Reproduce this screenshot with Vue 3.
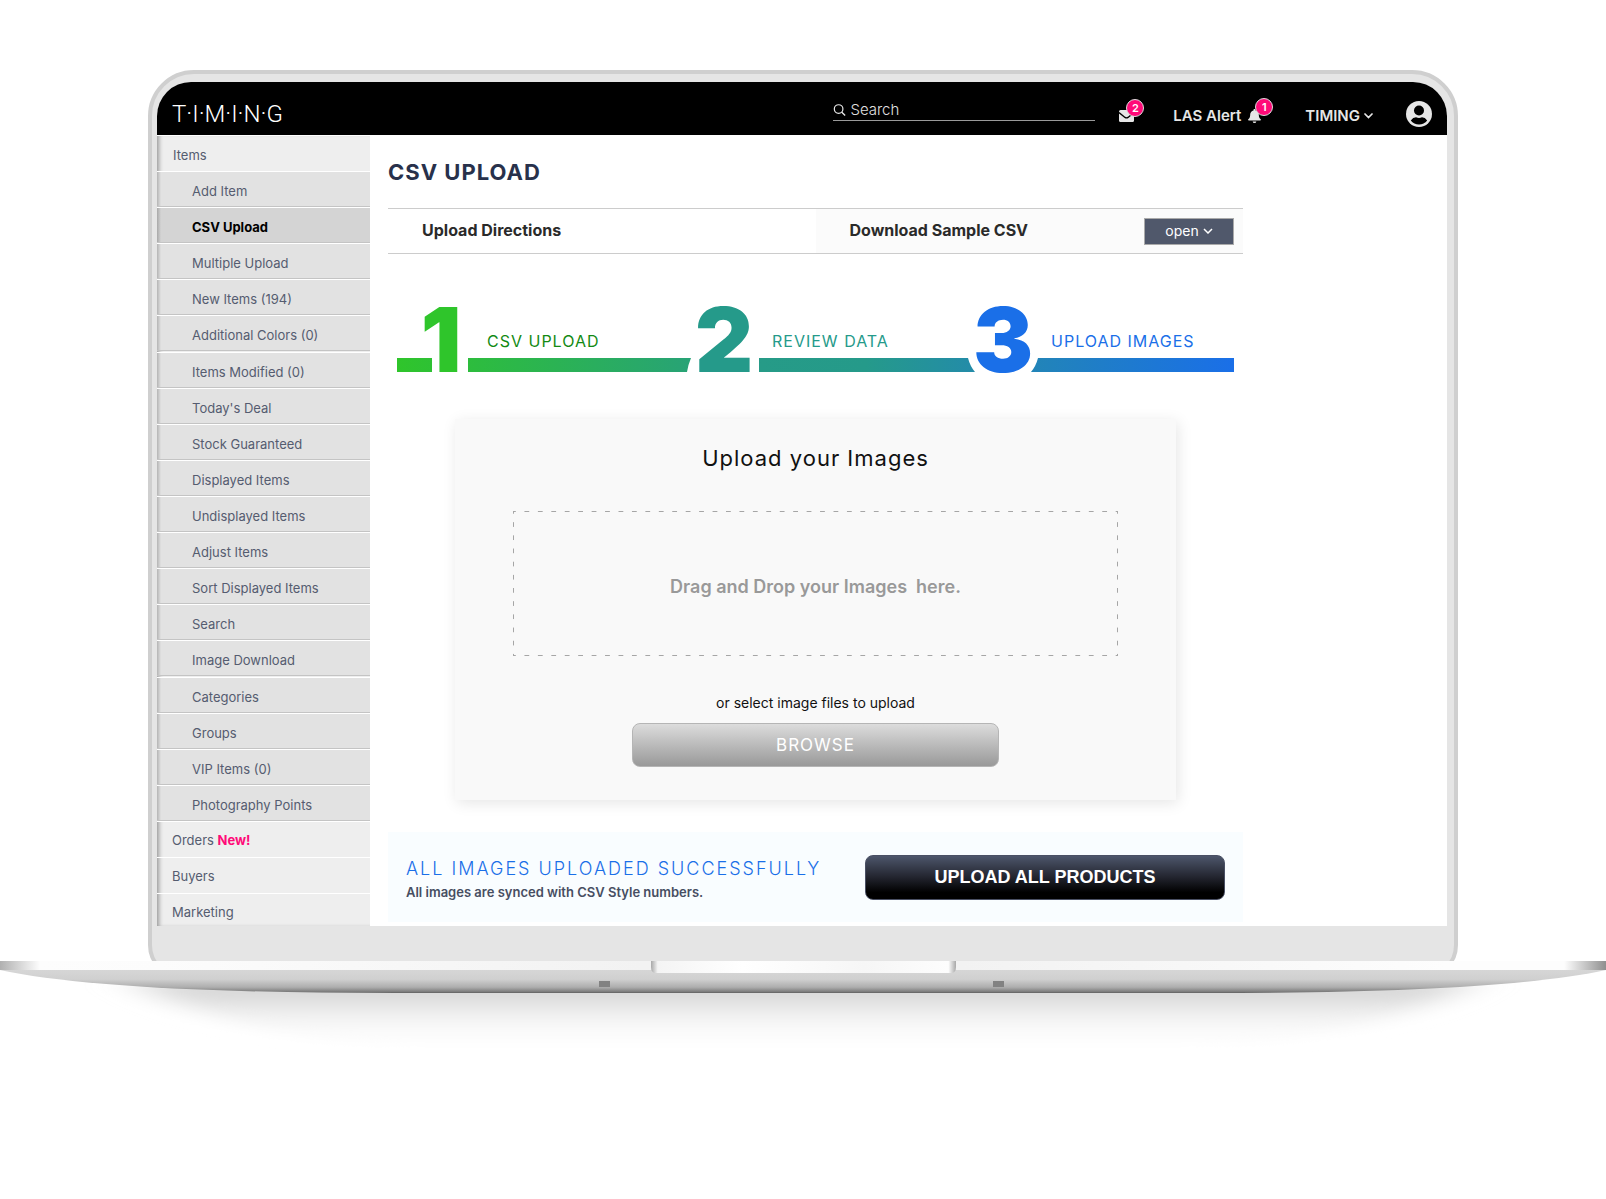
<template>
  <div class="stage">
    <div class="lid">
      <div class="screen">
        <header class="topbar">
          <a href="#" class="logo">T·I·M·I·N·G</a>
          <label class="search">
            <svg width="14" height="14" viewBox="0 0 14 14" aria-hidden="true">
              <circle cx="6" cy="6" r="4.6" fill="none" stroke="#e6e6e6" stroke-width="1.3" />
              <path d="M9.4 9.4 13 13" stroke="#e6e6e6" stroke-width="1.5" />
            </svg>
            <input v-model="query" type="text" placeholder="Search" aria-label="Search" />
          </label>
          <button class="top-item mail" aria-label="Messages">
            <span class="icon-wrap">
              <svg width="15" height="12" viewBox="0 0 15 12">
                <rect width="15" height="12" rx="1.5" fill="#e6e6e6" />
                <path d="M0 2.6 6 7.4q1.5 1 3 0L15 2.6" fill="none" stroke="#000" stroke-width="1.3" />
              </svg>
              <span class="badge">2</span>
            </span>
          </button>
          <button class="top-item alert">
            LAS Alert
            <span class="icon-wrap">
              <svg width="13" height="14" viewBox="0 0 13 14">
                <path d="M6.5 0c.6 0 1 .4 1 1v.4c2 .4 3.3 2 3.3 4.1 0 2.8.7 3.7 1.9 4.8.5.5.2 1.3-.6 1.3H.9c-.8 0-1.1-.8-.6-1.3C1.5 9.2 2.2 8.3 2.2 5.5c0-2.1 1.3-3.7 3.3-4.1V1c0-.6.4-1 1-1z" fill="#e6e6e6" />
                <path d="M4.7 12.4h3.6a1.8 1.6 0 0 1-3.6 0z" fill="#e6e6e6" />
              </svg>
              <span class="badge">1</span>
            </span>
          </button>
          <button class="top-item account">
            TIMING
            <svg width="9" height="6" viewBox="0 0 9 6">
              <path d="M1 1l3.5 3.5L8 1" fill="none" stroke="#e6e6e6" stroke-width="1.7" stroke-linecap="round" />
            </svg>
          </button>
          <button class="profile" aria-label="Profile">
            <svg width="26" height="26" viewBox="0 0 26 26">
              <circle cx="13" cy="13" r="13" fill="#e6e6e6" />
              <circle cx="13" cy="9.5" r="5" fill="#000" />
              <path d="M4.8 19.5q2.2-3.2 5.2-3.2 3 1.2 6 0 3 0 5.2 3.2a10.5 10.5 0 0 1-16.4 0z" fill="#000" />
            </svg>
          </button>
        </header>

        <div class="body">
          <nav class="sidebar">
            <a href="#" class="section first">Items</a>
            <ul class="sub">
              <li v-for="item in items" :key="item">
                <a href="#" :class="{ active: item === activeItem }" @click.prevent="activeItem = item">{{ item }}</a>
              </li>
            </ul>
            <a href="#" class="section">Orders <b>New!</b></a>
            <a href="#" class="section">Buyers</a>
            <a href="#" class="section last">Marketing</a>
          </nav>

          <main class="content">
            <h1>CSV UPLOAD</h1>

            <div class="tabs">
              <div class="tab">
                <h2>Upload Directions</h2>
              </div>
              <div class="tab sample">
                <h2>Download Sample CSV</h2>
                <button class="open">
                  open
                  <svg width="10" height="6" viewBox="0 0 10 6">
                    <path d="M1 1l4 4 4-4" fill="none" stroke="#fff" stroke-width="1.5" />
                  </svg>
                </button>
              </div>
            </div>

            <svg class="steps" viewBox="0 -20 855 120">
              <defs>
                <linearGradient id="bar" gradientUnits="userSpaceOnUse" x1="9" y1="0" x2="846" y2="0">
                  <stop offset="0" stop-color="#2fc52b" />
                  <stop offset="0.43" stop-color="#269b87" />
                  <stop offset="0.56" stop-color="#259a8a" />
                  <stop offset="0.72" stop-color="#2388b0" />
                  <stop offset="1" stop-color="#1a6fe8" />
                </linearGradient>
              </defs>
              <g fill="url(#bar)">
                <path d="M9 58h35v14H9z" />
                <path d="M80 58h223q-3 7-4 14H80z" />
                <path d="M371 58h209q2 8 7 14H371z" />
                <path d="M650 58h196v14H643q5-6 7-14z" />
              </g>
              <g v-for="step in steps" :key="step.num">
                <text class="num" :x="step.numX" y="72" :fill="step.color">{{ step.num }}</text>
                <text class="label" :x="step.labelX" y="47" :fill="step.labelColor">{{ step.label }}</text>
              </g>
            </svg>

            <section class="card">
              <h3>Upload your Images</h3>
              <div class="dropzone">Drag and Drop your Images&nbsp; here.</div>
              <p>or select image files to upload</p>
              <button class="browse">BROWSE</button>
            </section>

            <section class="result">
              <div class="message">
                <h3>ALL IMAGES UPLOADED SUCCESSFULLY</h3>
                <p>All images are synced with CSV Style numbers.</p>
              </div>
              <button class="upload-all">UPLOAD ALL PRODUCTS</button>
            </section>
          </main>
        </div>
      </div>
    </div>

    <!-- laptop base and its shadow -->
    <svg class="base" viewBox="0 0 1606 120" aria-hidden="true">
      <defs>
        <linearGradient id="strip">
          <stop offset="0" stop-color="#b0b0b0" />
          <stop offset="0.025" stop-color="#fdfdfd" />
          <stop offset="0.1" stop-color="#fcfcfc" />
          <stop offset="0.4" stop-color="#f2f2f2" />
          <stop offset="0.6" stop-color="#f2f2f2" />
          <stop offset="0.9" stop-color="#fdfdfd" />
          <stop offset="0.974" stop-color="#fdfdfd" />
          <stop offset="1" stop-color="#8f8f8f" />
        </linearGradient>
        <linearGradient id="hull" x2="0" y2="1">
          <stop offset="0" stop-color="#d6d6d6" />
          <stop offset="0.4" stop-color="#d0d0d0" />
          <stop offset="0.75" stop-color="#adadad" />
          <stop offset="0.93" stop-color="#808080" />
          <stop offset="1" stop-color="#606060" />
        </linearGradient>
        <linearGradient id="notch">
          <stop offset="0" stop-color="#a8a8a8" />
          <stop offset="0.022" stop-color="#f4f4f4" />
          <stop offset="0.3" stop-color="#fff" />
          <stop offset="0.7" stop-color="#f6f6f6" />
          <stop offset="0.975" stop-color="#fdfdfd" />
          <stop offset="1" stop-color="#a8a8a8" />
        </linearGradient>
        <linearGradient id="fall" x2="0" y2="1">
          <stop offset="0" stop-color="#d6d6d6" />
          <stop offset="0.2" stop-color="#dcdcdc" />
          <stop offset="0.5" stop-color="#f1f1f1" />
          <stop offset="0.75" stop-color="#fbfbfb" />
          <stop offset="1" stop-color="#fff" />
        </linearGradient>
        <filter id="soft" x="-10%" y="-30%" width="120%" height="160%">
          <feGaussianBlur stdDeviation="26 4" />
        </filter>
      </defs>
      <path d="M140 22H1466Q1420 62 1240 88H366Q186 62 140 22z" fill="url(#fall)" filter="url(#soft)" />
      <path d="M0 9H1606Q1500 32 1210 32H396Q106 32 0 9z" fill="url(#hull)" />
      <rect width="1606" height="9" fill="url(#strip)" />
      <path d="M651 0h305v6q0 6-5 6H656q-5 0-5-6z" fill="url(#notch)" />
      <rect x="599" y="20" width="11" height="6" fill="#828282" />
      <rect x="993" y="20" width="11" height="6" fill="#828282" />
    </svg>
  </div>
</template>

<script setup>
import { ref } from 'vue'

const query = ref('')
const activeItem = ref('CSV Upload')

const items = [
  'Add Item',
  'CSV Upload',
  'Multiple Upload',
  'New Items (194)',
  'Additional Colors (0)',
  'Items Modified (0)',
  "Today's Deal",
  'Stock Guaranteed',
  'Displayed Items',
  'Undisplayed Items',
  'Adjust Items',
  'Sort Displayed Items',
  'Search',
  'Image Download',
  'Categories',
  'Groups',
  'VIP Items (0)',
  'Photography Points'
]

const steps = [
  { num: 1, label: 'CSV UPLOAD', numX: 53, labelX: 99, color: '#2fc52b', labelColor: '#138a13' },
  { num: 2, label: 'REVIEW DATA', numX: 336, labelX: 384, color: '#259a8a', labelColor: '#259a8a' },
  { num: 3, label: 'UPLOAD IMAGES', numX: 615, labelX: 663, color: '#1a6fe8', labelColor: '#1a6fe8' }
]
</script>

<style>
body {
  margin: 0;
  background: #fff;
}
</style>

<style scoped>
.stage {
  padding-top: 70px;
  font-family: Inter, sans-serif;
  overflow: hidden;
}

.stage * {
  box-sizing: border-box;
}

h1, h2, h3, p, ul {
  margin: 0;
  padding: 0;
}

button {
  font-family: inherit;
  cursor: pointer;
}

a {
  text-decoration: none;
}

.lid {
  margin: 0 148px;
  padding: 8px 7px 49px 5px;
  border: 4px solid #cfcfcf;
  border-radius: 46px 46px 34px 34px;
  background: #e5e5e5;
}

.screen {
  overflow: hidden;
  border-radius: 34px 34px 0 0;
  background: #fff;
}

.topbar {
  display: flex;
  align-items: center;
  height: 53px;
  padding: 10px 15px 0 15px;
  background: #000;
}

.logo {
  margin-right: auto;
  padding-top: 1px;
  font-family: Roboto, sans-serif;
  font-size: 24px;
  font-weight: 300;
  color: #fff;
}

.search {
  display: flex;
  align-items: center;
  gap: 4px;
  width: 262px;
  height: 20px;
  margin: 0 24px 6px 0;
  border-bottom: 1px solid #9a9a9a;
}

.search input {
  width: 100%;
  padding: 0;
  border: 0;
  outline: 0;
  background: none;
  font: 300 15px/18px Inter, sans-serif;
  color: #e6e6e6;
}

.search input::placeholder {
  color: #e0e0e0;
  opacity: 1;
}

.top-item,
.profile {
  display: flex;
  align-items: center;
  padding: 0;
  border: 0;
  background: none;
}

.top-item {
  gap: 7px;
  padding-top: 5px;
  font-size: 15px;
  line-height: 20px;
  font-weight: 600;
  color: #e6e6e6;
}

.mail {
  margin-right: 39px;
}

.alert {
  margin-right: 44px;
}

.account {
  gap: 4px;
  margin-right: 33px;
}

.icon-wrap {
  position: relative;
  display: flex;
}

.badge {
  position: absolute;
  top: -11px;
  left: 7px;
  width: 18px;
  height: 18px;
  border: 1px solid #ddd;
  border-radius: 50%;
  background: #ff0a78;
  font-size: 11px;
  line-height: 16px;
  text-align: center;
  color: #fff;
}

.body {
  display: flex;
}

.sidebar {
  flex: 0 0 213px;
  background: #eee;
  box-shadow: inset 4px 0 4px -2px #999;
  font-size: 13px;
  line-height: 16px;
}

.sidebar a {
  display: block;
  color: #555c70;
}

.section {
  padding: 10px 15px 9px;
  border-top: 1px solid #fff;
}

.section.first {
  padding: 11px 16px 8px;
}

.section.last {
  padding-bottom: 6px;
}

.section b {
  color: #ff0a78;
}

.sub {
  display: flex;
  flex-direction: column;
  min-height: 650px;
  list-style: none;
}

.sub li {
  flex: 1;
}

.sub a {
  height: 100%;
  padding: 11px 0 7px 35px;
  border-top: 1px solid #fff;
  border-bottom: 1px solid #c4c4c4;
  background: linear-gradient(90deg, #b4b4b4, #e2e2e2 4px);
}

.sub a.active {
  background: linear-gradient(90deg, #a8a8a8, #d4d4d4 4px);
  font-weight: 700;
  color: #000;
}

.content {
  flex: 1;
  max-width: 891px;
  padding: 22px 18px 4px;
}

h1 {
  margin-bottom: 21px;
  font-size: 22px;
  line-height: 30px;
  font-weight: 700;
  letter-spacing: 1px;
  color: #28314b;
}

.tabs {
  display: flex;
  border-top: 1px solid #ccc;
  border-bottom: 1px solid #ccc;
}

.tab {
  display: flex;
  flex: 1;
  align-items: center;
  justify-content: space-between;
  height: 44px;
  padding: 0 9px 0 34px;
}

.tab h2 {
  padding-bottom: 2px;
  font-size: 16px;
  line-height: 20px;
  font-weight: 700;
  color: #2a2a2a;
}

.sample {
  background: #fbfbfb;
}

.open {
  width: 90px;
  height: 27px;
  padding: 0 0 1px;
  border: 1px solid #aaa;
  background: #50586b;
  font-size: 14px;
  color: #fff;
}

.open svg {
  vertical-align: 2px;
}

.steps {
  display: block;
  width: 100%;
  margin: 26px 0 19px;
}

.num {
  font-size: 90px;
  font-weight: 900;
  text-anchor: middle;
}

.label {
  font-size: 16px;
  letter-spacing: 1px;
}

.card {
  display: flex;
  flex-direction: column;
  align-items: center;
  margin: 0 67px 32px;
  padding: 24px 58px 33px;
  background: #f9f9f9;
  box-shadow: 2px 3px 14px rgba(0, 0, 0, 0.1);
}

.card h3 {
  margin-bottom: 38px;
  font-size: 22px;
  line-height: 30px;
  font-weight: 400;
  letter-spacing: 1px;
  color: #111;
}

/* four dashed edges, dashes centred on the corners */
.dropzone {
  display: flex;
  align-items: center;
  justify-content: center;
  width: 100%;
  height: 145px;
  padding-top: 6px;
  background:
    linear-gradient(90deg, #a6a6a6 5px, transparent 5px) -2px 0 / calc(100% / 45) 1px repeat-x,
    linear-gradient(90deg, #a6a6a6 5px, transparent 5px) -2px 100% / calc(100% / 45) 1px repeat-x,
    linear-gradient(#a6a6a6 5px, transparent 5px) 0 -2px / 1px calc(100% / 11) repeat-y,
    linear-gradient(#a6a6a6 5px, transparent 5px) 100% -2px / 1px calc(100% / 11) repeat-y;
  font-size: 18px;
  font-weight: 600;
  color: #999;
}

.card p {
  margin: 37px 0 10px;
  font-size: 14px;
  line-height: 20px;
  color: #111;
}

.browse {
  width: 367px;
  height: 44px;
  border: 1px solid #b5b5b5;
  border-radius: 8px;
  background: linear-gradient(#dcdcdc, #999);
  font-size: 17px;
  letter-spacing: 1px;
  color: #fff;
}

.result {
  display: flex;
  align-items: center;
  justify-content: space-between;
  padding: 21px 18px;
  background: #f9fdff;
}

.message {
  padding-top: 4px;
}

.result h3 {
  font-size: 18px;
  line-height: 24px;
  font-weight: 300;
  letter-spacing: 2px;
  color: #1a6fe8;
}

.result p {
  padding-top: 2px;
  font-size: 13px;
  line-height: 18px;
  font-weight: 600;
  color: #474e62;
}

.upload-all {
  width: 360px;
  height: 45px;
  border: 1px solid #4a5064;
  border-radius: 8px;
  background: linear-gradient(#4d566b, #22242e 50%, #000 85%);
  font-family: "Liberation Sans", sans-serif;
  font-size: 18px;
  font-weight: 700;
  color: #fff;
}

.base {
  position: relative;
  display: block;
  width: 100%;
  margin-top: -18px;
}
</style>
